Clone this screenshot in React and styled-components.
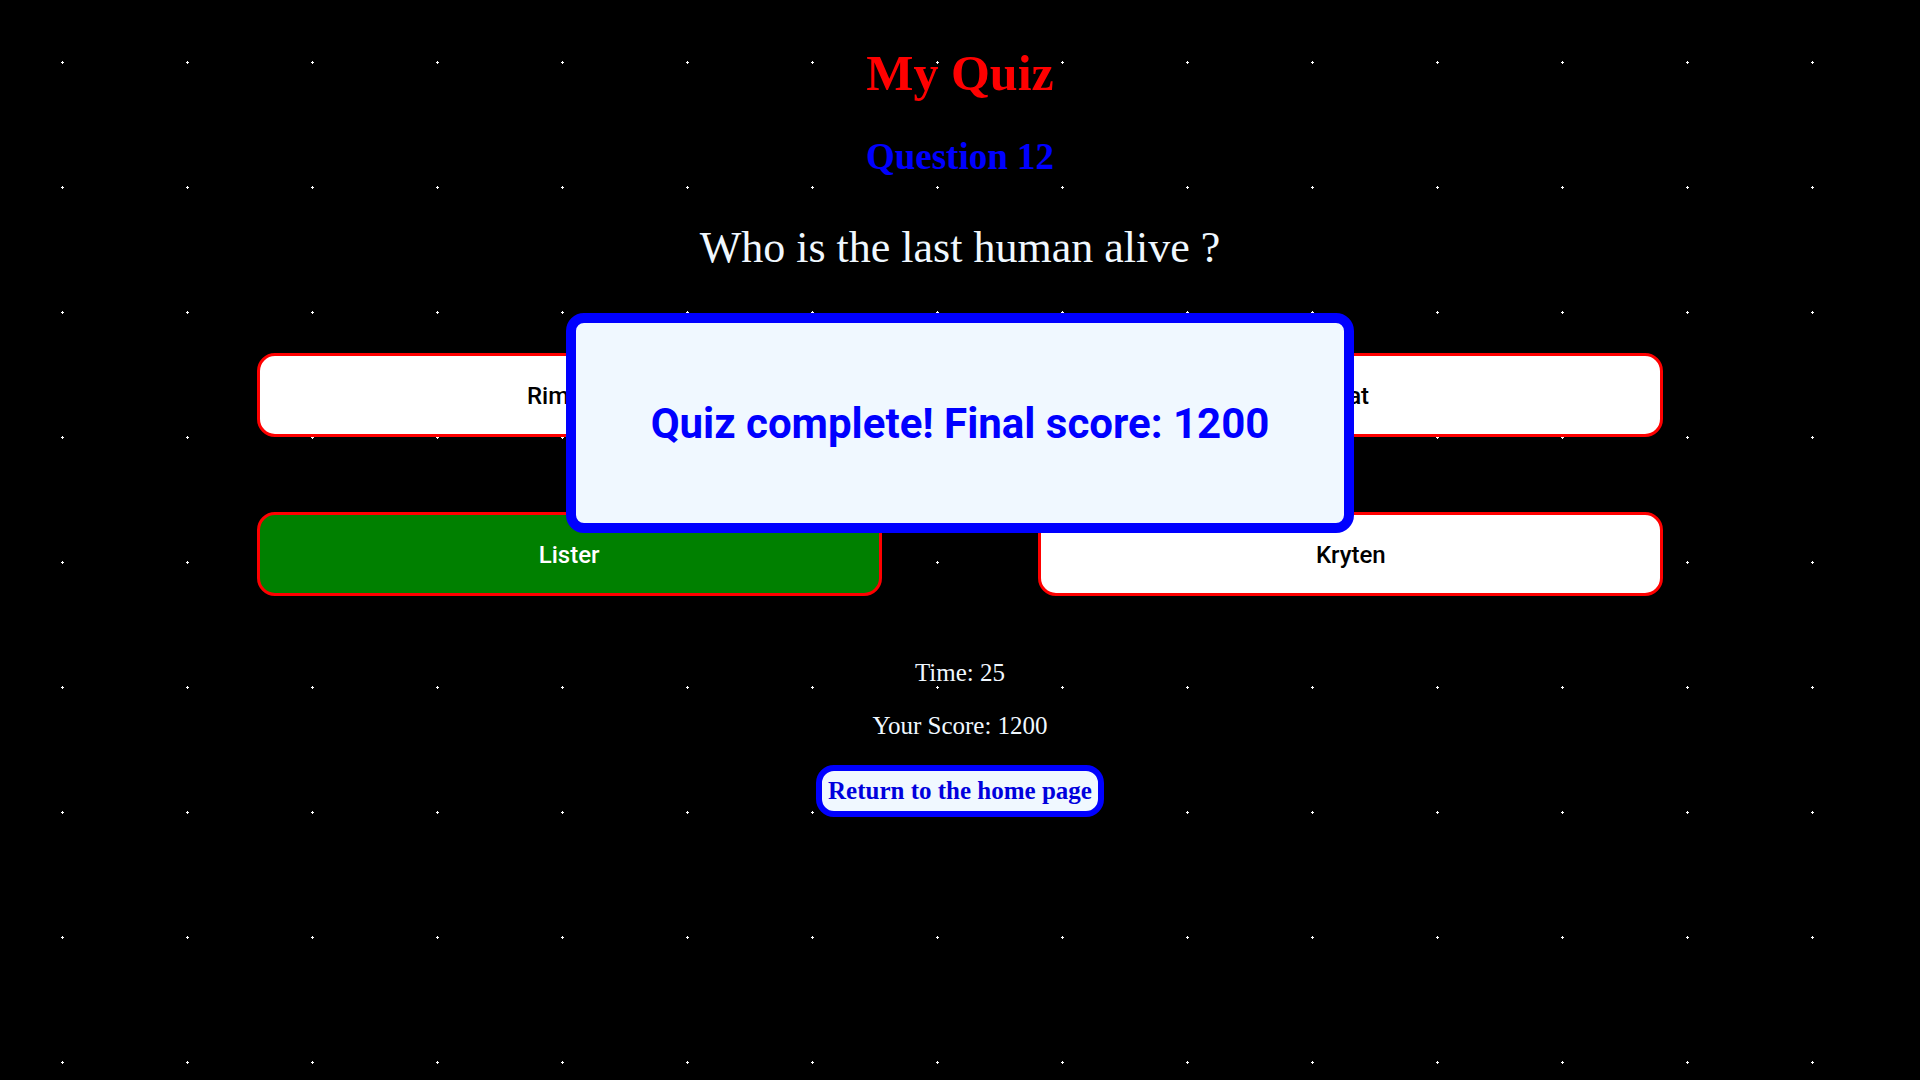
import React from "react";
import styled, { createGlobalStyle } from "styled-components";

const GlobalStyle = createGlobalStyle`
  * {
    box-sizing: border-box;
  }

  body {
    margin: 0;
    min-height: 100vh;
    background-color: black;
    background-image: radial-gradient(circle closest-side, white 2%, transparent 2%);
    background-size: 125px 125px;
    color: aliceblue;
    font-family: "Liberation Serif", "Times New Roman", serif;
    font-size: 25px;
    line-height: 28px;
  }
`;

const Page = styled.main`
  display: flex;
  flex-direction: column;
  align-items: center;
  padding: 44px 22px 0;
  text-align: center;
`;

const Title = styled.h1`
  margin: 0;
  color: red;
  font-size: 50px;
  line-height: 58px;
`;

const QuestionNumber = styled.h2`
  margin: 33px 0 0;
  color: blue;
  font-size: 37px;
  line-height: 44px;
`;

const Question = styled.p`
  margin: 44px 0;
  font-size: 44px;
  line-height: 50px;
`;

const Answers = styled.div`
  display: grid;
  grid-template-columns: 4fr 1fr 4fr;
  row-gap: 75px;
  width: 75%;
  padding-top: 36px;
`;

const Answer = styled.button`
  height: 84px;
  padding: 2px 0 0;
  border: 3px solid red;
  border-radius: 18px;
  background: ${({ $correct }) => ($correct ? "green" : "white")};
  color: ${({ $correct }) => ($correct ? "white" : "black")};
  font-family: Roboto, "Liberation Sans", sans-serif;
  font-size: 24px;
  font-weight: 500;

  &:nth-child(even) {
    grid-column: 3;
  }
`;

const Stats = styled.div`
  display: flex;
  flex-direction: column;
  gap: 25px;
  padding: 63px 0 25px;
`;

const Stat = styled.p`
  margin: 0;
`;

const HomeLink = styled.a`
  padding: 6px;
  border: 6px solid blue;
  border-radius: 18px;
  background: aliceblue;
  color: #0000dd;
  font-weight: bold;
  text-decoration: none;
`;

const Overlay = styled.div`
  position: fixed;
  inset: 313px 0 auto;
  display: flex;
  justify-content: center;
`;

const Result = styled.div`
  padding: 76px 75px 74px;
  border: 10px solid blue;
  border-radius: 18px;
  background: aliceblue;
  color: blue;
  font-family: Roboto, "Liberation Sans", sans-serif;
  font-size: 42px;
  font-weight: bold;
  line-height: 50px;
`;

const answers = [
  { name: "Rimmer" },
  { name: "Cat" },
  { name: "Lister", correct: true },
  { name: "Kryten" },
];

export default function App() {
  return (
    <>
      <GlobalStyle />
      <Page>
        <Title>My Quiz</Title>
        <QuestionNumber>Question 12</QuestionNumber>
        <Question>Who is the last human alive ?</Question>
        <Answers>
          {answers.map(({ name, correct }) => (
            <Answer key={name} type="button" $correct={correct}>
              {name}
            </Answer>
          ))}
        </Answers>
        <Stats>
          <Stat>Time: 25</Stat>
          <Stat>Your Score: 1200</Stat>
        </Stats>
        <HomeLink href="#home">Return to the home page</HomeLink>
      </Page>
      <Overlay>
        <Result role="status">Quiz complete! Final score: 1200</Result>
      </Overlay>
    </>
  );
}
